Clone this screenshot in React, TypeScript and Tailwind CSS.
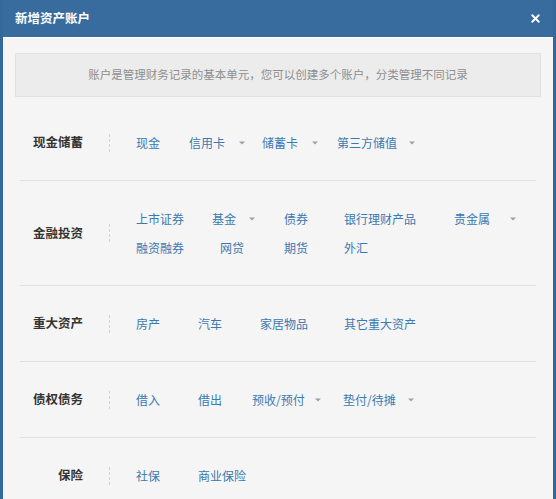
import { X } from "lucide-react";

type Item = { name: string; w?: string; caret?: boolean; caretGap?: string };

interface RowProps {
  label: string;
  lines: Item[][];
}

const rows: RowProps[] = [
  {
    label: "现金储蓄",
    lines: [
      [
        { name: "现金", w: "w-[53px]" },
        { name: "信用卡", w: "w-[73px]", caret: true },
        { name: "储蓄卡", w: "w-[75px]", caret: true },
        { name: "第三方储值", caret: true, caretGap: "ml-[12px]" },
      ],
    ],
  },
  {
    label: "金融投资",
    lines: [
      [
        { name: "上市证券", w: "w-[76px]" },
        { name: "基金", w: "w-[72px]", caret: true, caretGap: "ml-[13px]" },
        { name: "债券", w: "w-[60px]" },
        { name: "银行理财产品", w: "w-[110px]" },
        { name: "贵金属", caret: true, caretGap: "ml-[20px]" },
      ],
      [
        { name: "融资融券", w: "w-[84px]" },
        { name: "网贷", w: "w-[64px]" },
        { name: "期货", w: "w-[60px]" },
        { name: "外汇" },
      ],
    ],
  },
  {
    label: "重大资产",
    lines: [
      [
        { name: "房产", w: "w-[62px]" },
        { name: "汽车", w: "w-[62px]" },
        { name: "家居物品", w: "w-[84px]" },
        { name: "其它重大资产" },
      ],
    ],
  },
  {
    label: "债权债务",
    lines: [
      [
        { name: "借入", w: "w-[62px]" },
        { name: "借出", w: "w-[54px]" },
        { name: "预收/预付", w: "w-[91px]", caret: true, caretGap: "ml-[10px]" },
        { name: "垫付/待摊", caret: true, caretGap: "ml-[12px]" },
      ],
    ],
  },
  {
    label: "保险",
    lines: [
      [
        { name: "社保", w: "w-[62px]" },
        { name: "商业保险" },
      ],
    ],
  },
];

function Caret({ gap }: { gap?: string }) {
  return (
    <svg
      width="6"
      height="4"
      viewBox="0 0 6 4"
      className={`${gap ?? "ml-[14px]"} shrink-0`}
    >
      <path d="M0 0.5h6L3 3.5z" fill="#a0a0a0" />
    </svg>
  );
}

function AccountRow({ label, lines }: RowProps) {
  return (
    <div className="flex items-center border-b border-[#e1e1e1] py-[23px] last:border-b-0">
      <div className="w-[63px] shrink-0 text-right text-[12.5px] font-bold text-[#333]">
        {label}
      </div>
      <div className="mx-[26px] h-[18px] border-l border-dashed border-[#d3d3d3]" />
      <div className="flex flex-col">
        {lines.map((line, i) => (
          <div key={i} className="flex items-center leading-[29px]">
            {line.map((item) => (
              <div
                key={item.name}
                className={`${item.w ?? ""} flex shrink-0 items-center text-[12px] text-[#3b79b2]`}
              >
                <span>{item.name}</span>
                {item.caret && <Caret gap={item.caretGap} />}
              </div>
            ))}
          </div>
        ))}
      </div>
    </div>
  );
}

export default function App() {
  return (
    <div
      className="h-[499px] w-[556px] overflow-hidden border-x-[3px] border-[#35689a] bg-[#f5f5f5]"
      style={{ fontFamily: '"Noto Sans CJK SC", "Noto Sans", sans-serif' }}
    >
      <div className="flex h-[37px] items-center justify-between bg-[#386c9f] pl-[12px] pr-[11px]">
        <h1 className="text-[12.5px] font-bold text-white">新增资产账户</h1>
        <X className="h-[13px] w-[13px] text-white" strokeWidth={3.5} />
      </div>
      <div className="border-t border-white px-[12px] pt-[15px]">
        <div className="flex h-[44px] items-center justify-center border border-[#e1e1e1] bg-[#ececec] text-[11.5px] text-[#8f8f8f]">
          账户是管理财务记录的基本单元，您可以创建多个账户，分类管理不同记录
        </div>
        <div className="mx-[5px] mt-[8px]">
          {rows.map((row) => (
            <AccountRow key={row.label} {...row} />
          ))}
        </div>
      </div>
    </div>
  );
}
